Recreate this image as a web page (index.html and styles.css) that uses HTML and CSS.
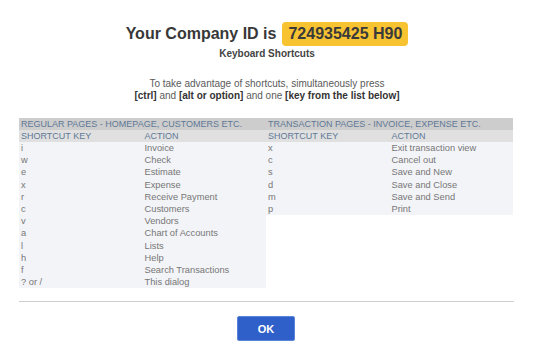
FILE: index.html
```html
<!DOCTYPE html>
<html>
<head>
<meta charset="utf-8">
<link rel="stylesheet" href="styles.css">
</head>
<body>
<div class="dialog">
  <div class="title-row">
    <span class="title">Your Company ID is</span>
    <span class="badge">724935425 H90</span>
  </div>
  <div class="subtitle">Keyboard Shortcuts</div>
  <p class="intro">To take advantage of shortcuts, simultaneously press<br><b>[ctrl]</b> and <b>[alt or option]</b> and one <b>[key from the list below]</b></p>
  <div class="tables">
    <table class="keys">
      <tr class="h1"><th colspan="2">REGULAR PAGES - HOMEPAGE, CUSTOMERS ETC.</th></tr>
      <tr class="h2"><th class="k">SHORTCUT KEY</th><th>ACTION</th></tr>
      <tr><td class="k">i</td><td>Invoice</td></tr>
      <tr><td class="k">w</td><td>Check</td></tr>
      <tr><td class="k">e</td><td>Estimate</td></tr>
      <tr><td class="k">x</td><td>Expense</td></tr>
      <tr><td class="k">r</td><td>Receive Payment</td></tr>
      <tr><td class="k">c</td><td>Customers</td></tr>
      <tr><td class="k">v</td><td>Vendors</td></tr>
      <tr><td class="k">a</td><td>Chart of Accounts</td></tr>
      <tr><td class="k">l</td><td>Lists</td></tr>
      <tr><td class="k">h</td><td>Help</td></tr>
      <tr><td class="k">f</td><td>Search Transactions</td></tr>
      <tr><td class="k">? or /</td><td>This dialog</td></tr>
    </table>
    <table class="keys">
      <tr class="h1"><th colspan="2">TRANSACTION PAGES - INVOICE, EXPENSE ETC.</th></tr>
      <tr class="h2"><th class="k">SHORTCUT KEY</th><th>ACTION</th></tr>
      <tr><td class="k">x</td><td>Exit transaction view</td></tr>
      <tr><td class="k">c</td><td>Cancel out</td></tr>
      <tr><td class="k">s</td><td>Save and New</td></tr>
      <tr><td class="k">d</td><td>Save and Close</td></tr>
      <tr><td class="k">m</td><td>Save and Send</td></tr>
      <tr><td class="k">p</td><td>Print</td></tr>
    </table>
  </div>
  <div class="sep"></div>
  <div class="actions"><button class="ok">OK</button></div>
</div>
</body>
</html>
```
FILE: styles.css
```css
html, body {
  margin: 0;
  padding: 0;
  background: #ffffff;
}
body {
  font-family: "Liberation Sans", Arial, sans-serif;
  color: #555;
}
.dialog {
  width: 496px;
  margin-left: 19px;
  padding-top: 22px;
}
.title-row {
  display: flex;
  justify-content: center;
  align-items: center;
  gap: 6px;
  height: 24px;
}
.title {
  font-size: 16px;
  font-weight: bold;
  color: #383838;
}
.badge {
  background: #f7c331;
  border-radius: 4px;
  height: 24px;
  line-height: 24px;
  padding: 0 6px;
  font-size: 16px;
  font-weight: bold;
  color: #3a3a3a;
}
.subtitle {
  margin-top: 2px;
  text-align: center;
  font-size: 10px;
  line-height: 12px;
  font-weight: bold;
  color: #444;
}
.intro {
  margin: 18px 0 0;
  text-align: center;
  font-size: 10px;
  line-height: 12px;
  color: #5a5a5a;
}
.intro b {
  color: #333;
}
.tables {
  margin-top: 16px;
  display: flex;
  align-items: flex-start;
}
.keys {
  width: 247px;
  border-collapse: collapse;
  font-size: 9.3px;
  table-layout: fixed;
}
.keys th, .keys td {
  padding: 0 0 0 2px;
  text-align: left;
  font-weight: normal;
  white-space: nowrap;
  overflow: hidden;
}
.keys .k {
  width: 123px;
}
.keys .h1 th {
  background: #cdcdcd;
  color: #5f7896;
  height: 12px;
  line-height: 12px;
  font-size: 9px;
}
.keys .h2 th {
  background: #e0e0e0;
  color: #5f7896;
  height: 12px;
  line-height: 12px;
  font-size: 9px;
}
.keys td {
  background: #f3f4f8;
  color: #767676;
  height: 12.2px;
  line-height: 12.2px;
}
.sep {
  margin-top: 13px;
  height: 1px;
  background: #cfcfcf;
  width: 495px;
}
.actions {
  display: flex;
  justify-content: center;
  margin-top: 14px;
}
.ok {
  width: 58px;
  height: 25px;
  margin-left: -2px;
  border: 1px solid #5b86d8;
  border-radius: 2px;
  background: #2f5fc8;
  color: #fff;
  font-family: "Liberation Sans", Arial, sans-serif;
  font-weight: bold;
  font-size: 11px;
  padding: 0;
}
```
